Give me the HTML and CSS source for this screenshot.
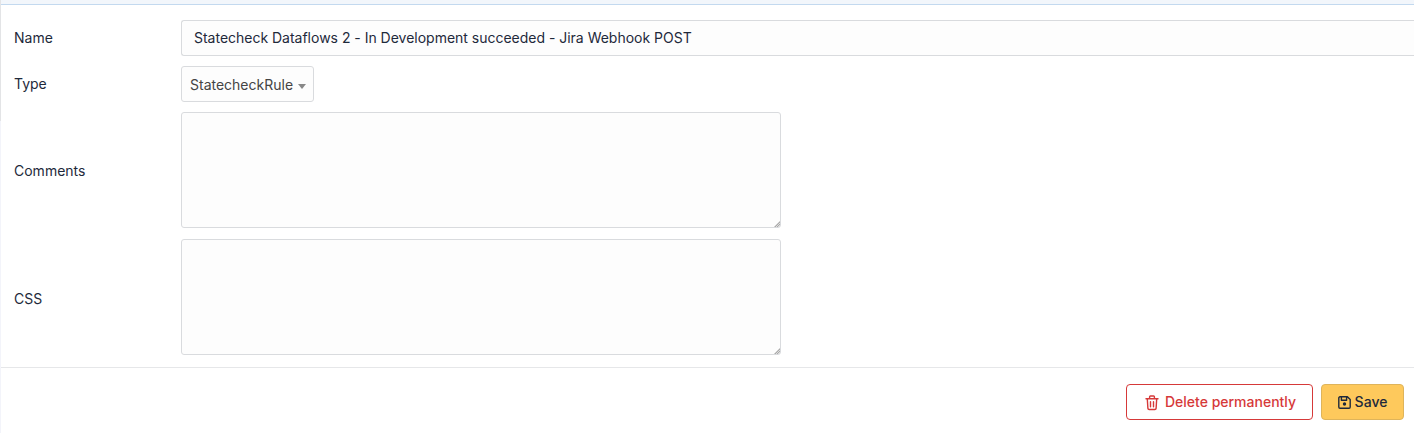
FILE: index.html
```html
<!DOCTYPE html>
<html lang="en">
<head>
<meta charset="utf-8">
<title>Rule</title>
<link rel="stylesheet" href="styles.css">
</head>
<body>
<form class="panel">
  <div class="topbar"></div>
  <div class="row row-name"><label class="label">Name</label><div class="input">Statecheck Dataflows 2 - In Development succeeded - Jira Webhook POST</div></div>
  <div class="row row-type"><label class="label">Type</label><div class="select"><span>StatecheckRule</span><i class="caret"></i></div></div>
  <div class="row row-area"><label class="label label-comments">Comments</label><div class="area-wrap"><textarea class="area"></textarea></div></div>
  <div class="row row-area"><label class="label label-css">CSS</label><div class="area-wrap"><textarea class="area"></textarea></div></div>
  <div class="footer">
    <button type="button" class="btn btn-delete"><svg class="icon-trash" viewBox="0 0 14 16" fill="none" stroke="currentColor" stroke-width="1.4" stroke-linecap="round" stroke-linejoin="round"><path d="M1 3.8h12M2.3 3.8l.6 9.6a1.2 1.2 0 0 0 1.2 1.1h5.8a1.2 1.2 0 0 0 1.2-1.1l.6-9.6M4.6 3.6V1.8a.8.8 0 0 1 .8-.8h3.2a.8.8 0 0 1 .8.8v1.8M5.5 6.7v5M8.5 6.7v5"/></svg>Delete permanently</button>
    <button type="button" class="btn btn-save"><svg class="icon-save" viewBox="0 0 13 13" fill="none" stroke="currentColor" stroke-width="1.4" stroke-linejoin="round"><path d="M2 .8h7.4l2.8 2.8V11a1.2 1.2 0 0 1-1.2 1.2H2A1.2 1.2 0 0 1 .8 11V2A1.2 1.2 0 0 1 2 .8zM3.4 1v3.2h5.2V1"/><circle cx="6.5" cy="8" r="1.7" fill="currentColor" stroke="none"/></svg>Save</button>
  </div>
</form>
</body>
</html>
```
FILE: styles.css
```css
* { box-sizing: border-box; }
body { margin: 0; background: #fff; color: #1e293b; font: 14px/20px Inter, sans-serif; overflow: hidden; }
.panel { height: 433px; border-left: 1px solid; border-image: linear-gradient(#e3e4e6 121px, #f3f4fa 121px) 1; border-width: 0 0 0 1px; }
.topbar { height: 5px; background: #f2f6fb; border-bottom: 1px solid #c3d9ef; margin-bottom: 15px; }
.row { display: flex; align-items: center; }
.label { width: 180px; padding-left: 13px; flex: none; }
.label-comments { padding-top: 2px; }
.label-css { padding-top: 4px; }
.input { flex: 1; height: 36px; border: 1px solid #d9dbde; border-right: 0; border-radius: 3px 0 0 3px; background: #fdfdfd; padding: 7px 12px; letter-spacing: -0.012px; }
.row-type { margin-top: 10px; }
.select { height: 36px; width: 133px; border: 1px solid #d9dbde; border-radius: 3px; background: #fdfdfd; display: flex; align-items: center; padding: 2px 0 0 8px; gap: 5px; color: #444; }
.caret { border: 4px solid transparent; border-top: 5px solid #888; border-bottom: 0; margin-top: 2px; }
.row-area { margin-top: 10px; }
.row-area + .row-area { margin-top: 11px; }
.area-wrap { position: relative; width: 600px; height: 116px; }
.area { display: block; width: 600px; height: 116px; border: 1px solid #d9dbde; border-radius: 3px; background: #fdfdfd; resize: none; outline: 0; }
.area-wrap::after { content: ""; position: absolute; right: 1px; bottom: 1px; width: 6px; height: 6px; background: repeating-linear-gradient(135deg, #aaa 0 1px, #ddd 1px 2px); clip-path: polygon(100% 0, 100% 100%, 0 100%); }
.footer { margin-top: 12px; border-top: 1px solid #e6e7e9; padding: 16px 10px 0 0; display: flex; justify-content: flex-end; gap: 8px; }
.btn { height: 36px; border-radius: 4px; font: 500 14px/20px Inter, sans-serif; display: flex; align-items: center; justify-content: center; padding: 0; }
.btn-delete { width: 187px; border: 1px solid #d63939; color: #d63939; background: #fff; gap: 6px; padding-left: 2px; }
.btn-save { width: 83px; border: 1px solid #dfb45a; color: #1e293b; background: #fec95c; gap: 4px; }
.icon-trash { width: 14px; height: 16px; margin-top: 1px; }
.icon-save { width: 13px; height: 13px; }
```
